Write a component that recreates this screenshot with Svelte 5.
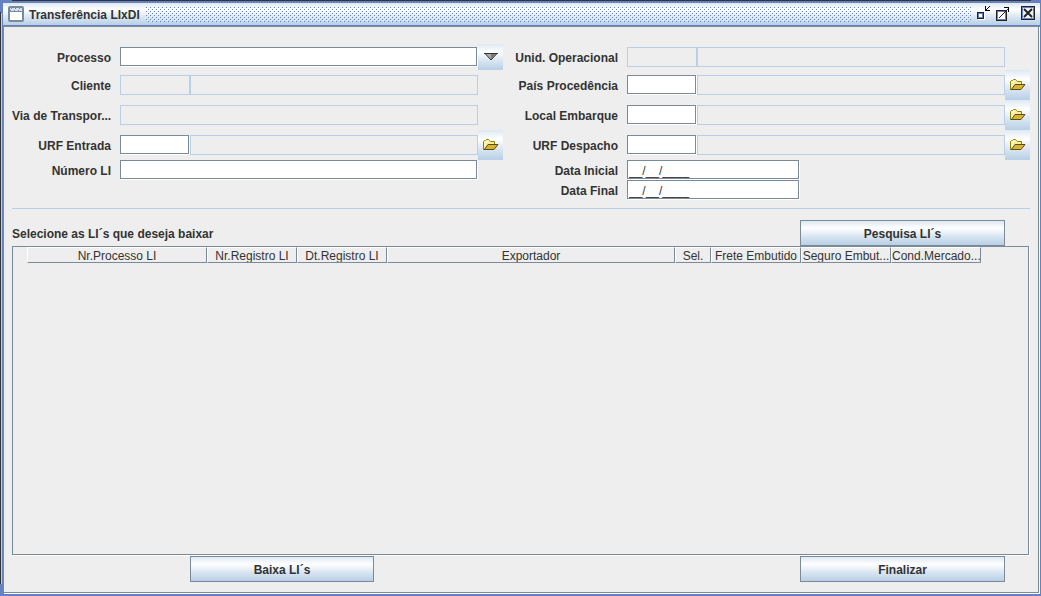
<script lang="ts">
	type Row = {
		id: string;
		label: string;
		kind: 'text' | 'empty' | 'pair' | 'code' | 'date';
		action?: 'drop' | 'folder';
	};

	const left: Row[] = [
		{ id: 'processo', label: 'Processo', kind: 'text', action: 'drop' },
		{ id: 'cliente', label: 'Cliente', kind: 'pair' },
		{ id: 'via', label: 'Via de Transpor...', kind: 'empty' },
		{ id: 'urf-entrada', label: 'URF Entrada', kind: 'code', action: 'folder' },
		{ id: 'numero', label: 'Número LI', kind: 'text' }
	];

	const right: Row[] = [
		{ id: 'unidade', label: 'Unid. Operacional', kind: 'pair' },
		{ id: 'pais', label: 'País Procedência', kind: 'code', action: 'folder' },
		{ id: 'embarque', label: 'Local Embarque', kind: 'code', action: 'folder' },
		{ id: 'urf-despacho', label: 'URF Despacho', kind: 'code', action: 'folder' },
		{ id: 'inicial', label: 'Data Inicial', kind: 'date' },
		{ id: 'final', label: 'Data Final', kind: 'date' }
	];

	const columns = [
		{ title: 'Nr.Processo LI', width: 180 },
		{ title: 'Nr.Registro LI', width: 90 },
		{ title: 'Dt.Registro LI', width: 90 },
		{ title: 'Exportador', width: 288 },
		{ title: 'Sel.', width: 36 },
		{ title: 'Frete Embutido', width: 90 },
		{ title: 'Seguro Embut...', width: 90 },
		{ title: 'Cond.Mercado...', width: 90 }
	];
</script>

{#snippet side(rows: Row[])}
	{#each rows as row}
		<label for={row.id}>{row.label}</label>
		<div class="field">
			{#if row.kind === 'text'}
				<input id={row.id} type="text" />
			{:else if row.kind === 'date'}
				<input id={row.id} class="date" type="text" value="__/__/____" />
			{:else if row.kind === 'empty'}
				<input id={row.id} type="text" disabled />
			{:else}
				<input id={row.id} class="code" type="text" disabled={row.kind === 'pair'} />
				<input type="text" aria-label="{row.label} descrição" disabled />
			{/if}
		</div>
		{#if row.action}
			<button class="pick" type="button" aria-label="Buscar {row.label}">
				{#if row.action === 'drop'}
					<svg width="14" height="8" viewBox="0 0 14 8">
						<path d="M1 .5h12L7 7z" fill="#aaa" stroke="#333" />
						<path d="M7 1h5L7 6z" fill="#777" />
						<path d="M0 .5h14" stroke="#333" />
					</svg>
				{:else}
					<svg width="16" height="12" viewBox="0 0 16 12">
						<path d="M.5 10.500V2.500l1-1h1l1-1h2l1 1 1 1h4v3.500L3 10.500z" fill="#ffeb9c" stroke="#858500" />
						<path d="M1 11L5 5.500h10L11 10.500H1z" fill="#d9b52c" stroke="#5a4a28" />
						<path d="M2 3h2v1H2zM3 2h2v1H3zM2 5h1v2H2z" fill="#fffbe0" />
					</svg>
				{/if}
			</button>
		{:else}
			<span></span>
		{/if}
	{/each}
{/snippet}

<div class="frame">
	<header>
		<svg class="icon" width="16" height="16" viewBox="0 0 16 16">
			<rect x="1" y="1" width="14" height="14" rx="1" fill="#fff" stroke="#7a8a99" stroke-width="2" />
			<path d="M2 2h12v3H2z" fill="#d5e2ef" />
			<path d="M3 2.500h11M2 4.500h12" stroke="#6382bf" stroke-dasharray="1 3" />
			<path d="M2 5.500h12" stroke="#7a8a99" />
		</svg>
		<h1>Transferência LIxDI</h1>
		<svg class="dots" height="16" shape-rendering="crispEdges">
			<defs>
				<pattern id="bumps" width="4" height="4" patternUnits="userSpaceOnUse">
					<path d="M1 1h1v1H1zM3 3h1v1H3z" fill="#6382bf" />
					<path d="M0 0h1v1H0zM2 2h1v1H2z" fill="#fff" />
				</pattern>
			</defs>
			<rect width="100%" height="16" fill="url(#bumps)" />
		</svg>
		<div class="controls">
			<button type="button" aria-label="Minimizar">
				<svg width="16" height="16" viewBox="0 0 16 16" shape-rendering="crispEdges">
					<path d="M3 7h7v7H3z" fill="#fff" />
					<path d="M2 6h7v7H2z" fill="#222" />
					<path d="M3 7h5v5H3z" fill="#6382bf" />
					<path d="M4 8h3v3H4z" fill="#fff" />
					<path d="M10 0h1v4h4v1h-5zM11 3h1v1h-1zM12 2h1v1h-1zM13 1h1v1h-1zM14 0h1v1h-1z" fill="#000" />
				</svg>
			</button>
			<button type="button" aria-label="Maximizar">
				<svg width="16" height="16" viewBox="0 0 16 16" shape-rendering="crispEdges">
					<path d="M1 4h11v11H1z" fill="#222" />
					<path d="M2 5h9v9H2z" fill="#6382bf" />
					<path d="M3 6h7v7H3z" fill="#fff" />
					<path d="M4 11h1v1H4zM5 10h1v1H5zM6 9h1v1H6zM7 8h1v1H7zM8 7h1v1H8zM9 6h1v1H9zM10 5h1v1h-1zM11 4h1v1h-1zM12 3h1v1h-1z" fill="#222" />
					<path d="M9 1h5v5h-1V2H9z" fill="#000" />
				</svg>
			</button>
			<button class="close" type="button" aria-label="Fechar">
				<svg width="16" height="16" viewBox="0 0 16 16" shape-rendering="crispEdges">
					<path d="M1 0h14v14H1z" fill="#222" />
					<path d="M2 1h12v12H2z" fill="#6382bf" />
					<path d="M3 2h10v10H3z" fill="#eef3f9" />
					<path d="M4 3l8 8M12 3l-8 8" stroke="#222" stroke-width="2" shape-rendering="auto" />
				</svg>
			</button>
		</div>
	</header>

	<main>
		<div class="form">
			<div class="side">{@render side(left)}</div>
			<div class="side wide">{@render side(right)}</div>
		</div>

		<hr />

		<div class="bar">
			<h2>Selecione as LI´s que deseja baixar</h2>
			<button class="action large" type="button">Pesquisa LI´s</button>
		</div>

		<div class="grid">
			<table>
				<thead>
					<tr>
						{#each columns as column}
							<th style="width: {column.width}px">{column.title}</th>
						{/each}
					</tr>
				</thead>
				<tbody></tbody>
			</table>
		</div>

		<div class="bar bottom">
			<button class="action" type="button">Baixa LI´s</button>
			<button class="action large" type="button">Finalizar</button>
		</div>
	</main>
</div>

<style>
	:global(body) {
		margin: 0;
		background: #6382bf;
	}
	* {
		box-sizing: border-box;
	}
	.frame {
		--line: #7a8a99;
		--soft: #b8cfe5;
		--metal: linear-gradient(#dde8f3, #fff 30%, #dde8f3 60%, #b8cfe5);
		display: flex;
		flex-direction: column;
		min-height: 100vh;
		padding: 3px 1px 2px 3px;
		/* dark edges stop short of the frame corners */
		background:
			linear-gradient(#333, #333) 12px 0 / calc(100% - 22px) 1px no-repeat,
			linear-gradient(#333, #333) 0 12px / 1px calc(100% - 24px) no-repeat,
			linear-gradient(#b8cfe5, #b8cfe5) 1px 13px / 1px calc(100% - 25px) no-repeat,
			#6382bf;
		color: #333;
		font: bold 12px/16px "Liberation Sans", Arial, sans-serif;
	}
	header {
		display: flex;
		align-items: center;
		height: 23px;
		padding: 0 4px 0 5px;
		background: var(--metal);
		border-bottom: 1px solid #6382bf;
	}
	.icon {
		margin-right: 5px;
	}
	h1,
	h2 {
		margin: 0;
		font: inherit;
	}
	h1,
	h2,
	label {
		padding-top: 1px;
	}
	.dots {
		flex: 1;
		width: 0;
		margin: 0 4px 0 5px;
	}
	.controls {
		display: flex;
		gap: 4px;
	}
	.controls button {
		display: flex;
		padding: 0;
		border: 0;
		background: none;
	}
	.controls .close {
		margin-left: 5px;
	}
	main {
		flex: 1;
		display: flex;
		flex-direction: column;
		margin: 0 1px 1px 0;
		padding: 17px 8px 10px;
		border: 1px solid var(--line);
		box-shadow: 1px 1px #fff;
		background: #eee;
	}
	.form {
		display: grid;
		grid-template-columns: minmax(0, 491fr) minmax(0, 527fr);
	}
	.side {
		display: grid;
		grid-template-columns: 108px minmax(0, 1fr) 25px;
		grid-template-rows: 26px 30px 30px 30px 20px 20px;
		align-items: center;
	}
	.wide {
		grid-template-columns: 124px minmax(0, 1fr) 25px;
	}
	label {
		padding-right: 9px;
		text-align: right;
		white-space: nowrap;
	}
	.field {
		display: flex;
	}
	input {
		flex: 1;
		min-width: 0;
		height: 19px;
		margin: 0 1px 1px 0;
		padding: 2px 1px 0;
		border: 1px solid var(--line);
		box-shadow: 1px 1px #fff;
		background: #fff;
		color: #333;
		font: 12px/16px "Liberation Sans", Arial, sans-serif;
	}
	input:disabled {
		height: 20px;
		margin: 0;
		border-color: var(--soft);
		box-shadow: none;
		background: #eee;
	}
	.code {
		flex: 0 0 69px;
	}
	.code:disabled {
		flex-basis: 70px;
	}
	.date {
		flex: 0 0 172px;
	}
	.pick {
		display: flex;
		align-items: center;
		justify-content: center;
		align-self: stretch;
		padding: 0;
		border: 0;
		background: var(--metal);
	}
	hr {
		width: 100%;
		margin: 8px 0 11px;
		border: 0;
		border-top: 1px solid var(--soft);
	}
	.bar {
		display: flex;
		align-items: center;
		justify-content: space-between;
		padding-right: 25px;
	}
	.bottom {
		padding-left: 178px;
	}
	.action {
		width: 184px;
		height: 26px;
		padding: 1px 0 0;
		border: 1px solid var(--line);
		background: var(--metal);
		color: inherit;
		font: inherit;
	}
	.large {
		width: 205px;
	}
	.grid {
		flex: 1;
		margin: 0 1px 1px 0;
		padding: 0 47px 0 14px;
		border: 1px solid var(--line);
		box-shadow: 1px 1px #fff;
	}
	table {
		width: 100%;
		table-layout: fixed;
		border-collapse: separate;
		border-spacing: 0;
	}
	th {
		height: 16px;
		padding: 2px 0 0;
		border: 1px solid var(--line);
		border-top-color: #fff;
		border-left-color: #fff;
		font-weight: normal;
		line-height: 12px;
		overflow: hidden;
		white-space: nowrap;
	}
</style>
